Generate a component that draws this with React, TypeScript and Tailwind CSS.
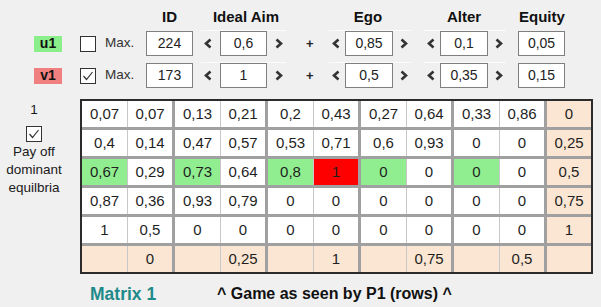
import React from "react";

const rows: string[][] = [
  ["0,07", "0,07", "0,13", "0,21", "0,2", "0,43", "0,27", "0,64", "0,33", "0,86", "0"],
  ["0,4", "0,14", "0,47", "0,57", "0,53", "0,71", "0,6", "0,93", "0", "0", "0,25"],
  ["0,67", "0,29", "0,73", "0,64", "0,8", "1", "0", "0", "0", "0", "0,5"],
  ["0,87", "0,36", "0,93", "0,79", "0", "0", "0", "0", "0", "0", "0,75"],
  ["1", "0,5", "0", "0", "0", "0", "0", "0", "0", "0", "1"],
  ["", "0", "", "0,25", "", "1", "", "0,75", "", "0,5", ""],
];

// highlighted cells: row 3 (index 2)
const greens = new Set(["2-0", "2-2", "2-4", "2-6", "2-8"]);
const reds = new Set(["2-5"]);

function cellBg(r: number, c: number) {
  if (r === 5 || c === 10) return "bg-[#fae6d2]";
  const key = `${r}-${c}`;
  if (reds.has(key)) return "bg-[#ff0000]";
  if (greens.has(key)) return "bg-[#90ee90]";
  return "bg-white";
}

function CheckBox({ checked }: { checked?: boolean }) {
  return (
    <div className="w-[16px] h-[16px] border border-[#333333] bg-white flex items-center justify-center shrink-0">
      {checked && (
        <svg width="12" height="12" viewBox="0 0 12 12">
          <polyline points="1.5,6 4.5,9.5 10.5,2" fill="none" stroke="#333333" strokeWidth="1.2" />
        </svg>
      )}
    </div>
  );
}

function Arrow({ dir }: { dir: "l" | "r" }) {
  return (
    <svg width="8" height="11" viewBox="0 0 8 11" className="shrink-0">
      <polyline
        points={dir === "l" ? "6.5,1.5 2,5.5 6.5,9.5" : "1.5,1.5 6,5.5 1.5,9.5"}
        fill="none"
        stroke="#333333"
        strokeWidth="2.6"
      />
    </svg>
  );
}

function Box({ value, w }: { value: string; w: string }) {
  return (
    <div
      className={`${w} h-[25px] bg-white border border-[#7f7f7f] flex items-center justify-center text-[14px] text-[#222222] shrink-0`}
    >
      {value}
    </div>
  );
}

function ControlRow(props: {
  label: string;
  labelBg: string;
  checked?: boolean;
  id: string;
  ideal: string;
  ego: string;
  alter: string;
  equity: string;
  className?: string;
}) {
  return (
    <div className={`flex items-center h-[25px] ${props.className ?? ""}`}>
      <div
        className={`ml-[34px] w-[28px] h-[16px] ${props.labelBg} flex items-center justify-center font-bold text-[14px] text-[#111111] shrink-0`}
      >
        {props.label}
      </div>
      <div className="ml-[18px]">
        <CheckBox checked={props.checked} />
      </div>
      <div className="ml-[9px] w-[41px] text-[13.5px] text-[#333333] shrink-0">Max.</div>
      <Box value={props.id} w="w-[47px]" />
      {/* Ideal Aim */}
      <div className="ml-[7px] px-[4px] flex items-center h-full shadow-[0_-2px_0_-1px_#fbfbfb]">
        <Arrow dir="l" />
        <div className="ml-[8px]">
          <Box value={props.ideal} w="w-[47px]" />
        </div>
        <div className="ml-[8px]">
          <Arrow dir="r" />
        </div>
      </div>
      <div className="ml-[19px] w-[7px] text-[13px] font-bold text-[#222222] leading-none shrink-0">+</div>
      {/* Ego */}
      <div className="ml-[15px] px-[4px] flex items-center h-full shadow-[0_-2px_0_-1px_#fbfbfb]">
        <Arrow dir="l" />
        <div className="ml-[5px]">
          <Box value={props.ego} w="w-[48px]" />
        </div>
        <div className="ml-[7px]">
          <Arrow dir="r" />
        </div>
      </div>
      {/* Alter */}
      <div className="ml-[11px] px-[4px] flex items-center h-full shadow-[0_-2px_0_-1px_#fbfbfb]">
        <Arrow dir="l" />
        <div className="ml-[5px]">
          <Box value={props.alter} w="w-[48px]" />
        </div>
        <div className="ml-[7px]">
          <Arrow dir="r" />
        </div>
      </div>
      <div className="ml-[11px]">
        <Box value={props.equity} w="w-[47px]" />
      </div>
    </div>
  );
}

export default function App() {
  return (
    <div
      className="w-[601px] h-[307px] bg-[#f0f0f0] overflow-hidden text-[#1a1a1a]"
      style={{ fontFamily: '"Liberation Sans", Arial, sans-serif' }}
    >
      {/* header */}
      <div className="pt-[8px] flex h-[25px] items-center font-bold text-[15px] text-[#111111] leading-[17px]">
        <div className="ml-[146px] w-[47px] text-center">ID</div>
        <div className="ml-[7px] w-[92px] text-center">Ideal Aim</div>
        <div className="ml-[36px] w-[80px] text-center">Ego</div>
        <div className="ml-[16px] w-[80px] text-center">Alter</div>
        <div className="ml-[15px] w-[45px] text-center">Equity</div>
      </div>

      <ControlRow
        className="mt-[6px]"
        label="u1"
        labelBg="bg-[#8aee8a]"
        id="224"
        ideal="0,6"
        ego="0,85"
        alter="0,1"
        equity="0,05"
      />
      <ControlRow
        className="mt-[7px]"
        label="v1"
        labelBg="bg-[#f08080]"
        checked
        id="173"
        ideal="1"
        ego="0,5"
        alter="0,35"
        equity="0,15"
      />

      {/* matrix area */}
      <div className="flex mt-[11px]">
        <div className="w-[68px] flex flex-col items-center shrink-0 text-[13.5px] text-[#1a1a1a]">
          <div className="mt-[2px] leading-[17px]">1</div>
          <div className="mt-[8px]">
            <CheckBox checked />
          </div>
          <div className="text-center leading-[18px] mt-[1px]">
            Pay off
            <br />
            dominant
            <br />
            equilbria
          </div>
        </div>

        <div className="ml-[12px] border-2 border-[#2b2b2b] bg-[#a0a0a0] flex flex-col gap-[3px]">
          {rows.map((row, r) => (
            <div key={r} className="flex h-[26px]">
              {row.map((v, c) => {
                const second = c % 2 === 1;
                const pairStart = c > 0 && c % 2 === 0;
                const w = c === 10 ? "w-[44px]" : "w-[45px]";
                return (
                  <div
                    key={c}
                    className={`${w} ${cellBg(r, c)} ${second ? "border-l border-[#c8c8c8]" : ""} ${
                      pairStart ? "ml-[3px]" : ""
                    } flex items-center justify-center text-[15px] text-[#1f1f1f]`}
                  >
                    {v}
                  </div>
                );
              })}
            </div>
          ))}
        </div>
      </div>

      {/* footer */}
      <div className="flex items-center mt-[10px] h-[20px] font-bold">
        <div className="ml-[90px] w-[127px] text-[17.5px] text-[#1f8a8a] shrink-0">Matrix 1</div>
        <div className="text-[16px] text-[#111111]">^ Game as seen by P1 (rows) ^</div>
      </div>
    </div>
  );
}
